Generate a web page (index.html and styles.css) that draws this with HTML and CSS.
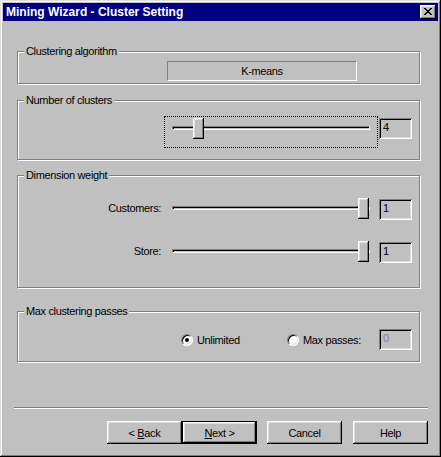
FILE: index.html
```html
<!DOCTYPE html>
<html lang="en">
<head>
    <meta charset="UTF-8">
    <title>Mining Wizard - Cluster Setting</title>
    <link rel="stylesheet" href="styles.css">
</head>
<body>

    <div class="window">

        <!-- Title bar -->
        <div class="titlebar">
            <span class="title">Mining Wizard - Cluster Setting</span>
            <button class="close-btn" aria-label="Close">
                <svg width="8" height="7" viewBox="0 0 8 7" shape-rendering="crispEdges">
                    <path fill="#000" d="M0 0h2v1H0zM6 0h2v1H6zM1 1h2v1H1zM5 1h2v1H5zM2 2h4v1H2zM3 3h2v1H3zM2 4h4v1H2zM1 5h2v1H1zM5 5h2v1H5zM0 6h2v1H0zM6 6h2v1H6z"/>
                </svg>
            </button>
        </div>

        <div class="content">

            <fieldset class="group group-algo">
                <legend>Clustering algorithm</legend>
                <div class="static-box">K-means</div>
            </fieldset>

            <fieldset class="group group-clusters">
                <legend>Number of clusters</legend>
                <div class="slider-row">
                    <div class="slider-box focused">
                        <div class="slider">
                            <div class="track"></div>
                            <div class="thumb" style="left: 21px;"></div>
                        </div>
                    </div>
                    <div class="edit edit-top">4</div>
                </div>
            </fieldset>

            <fieldset class="group group-weight">
                <legend>Dimension weight</legend>
                <div class="slider-row">
                    <span class="slider-label">Customers:</span>
                    <div class="slider-box">
                        <div class="slider">
                            <div class="track"></div>
                            <div class="thumb" style="left: 186px;"></div>
                        </div>
                    </div>
                    <div class="edit">1</div>
                </div>
                <div class="slider-row">
                    <span class="slider-label">Store:</span>
                    <div class="slider-box">
                        <div class="slider">
                            <div class="track"></div>
                            <div class="thumb" style="left: 186px;"></div>
                        </div>
                    </div>
                    <div class="edit">1</div>
                </div>
            </fieldset>

            <fieldset class="group group-passes">
                <legend>Max clustering passes</legend>
                <div class="radio-row">
                    <label class="radio-opt opt-unlimited"><span class="radio checked"></span>Unlimited</label>
                    <label class="radio-opt"><span class="radio"></span>Max passes:</label>
                    <div class="edit edit-disabled">0</div>
                </div>
            </fieldset>

            <div class="separator"></div>

            <!-- Wizard buttons -->
            <div class="buttons">
                <button class="btn">&lt; <u>B</u>ack</button>
                <button class="btn btn-default"><u>N</u>ext &gt;</button>
                <button class="btn btn-cancel">Cancel</button>
                <button class="btn btn-help">Help</button>
            </div>

        </div>
    </div>

</body>
</html>
```

FILE: styles.css
```css
* {
    box-sizing: border-box;
}

body {
    margin: 0;
    background-color: #c0c0c0;
    color: #000;
    font-family: "Liberation Sans", Arial, sans-serif;
    font-size: 11px;
    letter-spacing: -0.35px;
}

.window {
    width: 441px;
    height: 457px;
    padding: 3px;
    background-color: #c0c0c0;
    box-shadow: inset -1px -1px #000, inset 1px 1px #dfdfdf, inset -2px -2px #808080, inset 2px 2px #fff;
}

.titlebar {
    display: flex;
    align-items: center;
    justify-content: space-between;
    height: 18px;
    padding: 0 2px 0 3px;
    background-color: #000080;
    color: #fff;
    font-weight: bold;
    font-size: 12px;
    letter-spacing: 0;
}

.close-btn {
    display: flex;
    align-items: center;
    justify-content: center;
    width: 16px;
    height: 14px;
    padding: 0 1px 1px 0;
    border: none;
    background-color: #c0c0c0;
    box-shadow: inset -1px -1px #000, inset 1px 1px #fff, inset -2px -2px #808080, inset 2px 2px #dfdfdf;
}

/* Group boxes */
.group {
    width: 403px;
    margin: 0 0 0 14px;
    padding: 0 7px 0 0;
    border: 1px solid #808080;
    box-shadow: inset 1px 1px #fff, 1px 1px #fff;
}

.group legend {
    margin-left: 6px;
    padding: 0 2px;
    line-height: 13px;
    background-color: #c0c0c0;
}

.group-algo {
    margin-top: 24px;
    padding-top: 3px;
    padding-bottom: 2px;
}

.group-clusters {
    margin-top: 10px;
    padding-top: 9px;
    padding-bottom: 11px;
}

.group-weight {
    display: flex;
    flex-direction: column;
    gap: 11px;
    margin-top: 9px;
    padding-top: 14px;
    padding-bottom: 16px;
}

.group-passes {
    margin-top: 17px;
    padding-top: 11px;
    padding-bottom: 11px;
}

.static-box {
    width: 190px;
    height: 20px;
    margin-left: 149px;
    border: 1px solid;
    border-color: #808080 #fff #fff #808080;
    text-align: center;
    line-height: 18px;
}

/* Trackbars */
.slider-row {
    display: flex;
    justify-content: flex-end;
    align-items: flex-start;
}

.slider-label {
    margin-top: 6px;
    margin-right: 3px;
    line-height: 13px;
}

.slider-box {
    width: 214px;
    height: 32px;
    padding: 1px 7px 0;
    border: 1px dotted transparent;
}

.slider-box.focused {
    border-color: #000;
}

.slider {
    position: relative;
    height: 21px;
    padding-top: 8px;
}

.track {
    height: 4px;
    border: 1px solid;
    border-color: #808080 #fff #fff #808080;
    background-color: #c0c0c0;
    box-shadow: inset 1px 1px #000;
}

.thumb {
    position: absolute;
    top: 0;
    width: 11px;
    height: 21px;
    background-color: #c0c0c0;
    box-shadow: inset -1px -1px #000, inset 1px 1px #fff, inset -2px -2px #808080, inset 2px 2px #dfdfdf;
}

.edit {
    width: 33px;
    height: 21px;
    margin: 3px 0 0 1px;
    padding-left: 4px;
    background-color: #c0c0c0;
    line-height: 19px;
    box-shadow: inset 1px 1px #808080, inset -1px -1px #fff, inset 2px 2px #000, inset -2px -2px #dfdfdf;
}

.edit-top {
    margin-top: 2px;
}

.edit-disabled {
    margin: 0 0 0 auto;
    color: #808080;
}

/* Radio buttons */
.radio-row {
    display: flex;
    align-items: center;
    height: 21px;
    padding-left: 163px;
}

.radio-opt {
    display: flex;
    align-items: center;
    gap: 4px;
}

.opt-unlimited {
    width: 106px;
}

.radio {
    width: 12px;
    height: 12px;
    border: 1px solid;
    border-color: #808080 #fff #fff #808080;
    border-radius: 50%;
    background-color: #fff;
    box-shadow: inset 1px 1px #000, inset -1px -1px #dfdfdf;
}

.radio.checked::after {
    content: "";
    display: block;
    width: 4px;
    height: 4px;
    margin: 3px;
    border-radius: 50%;
    background-color: #000;
}

.separator {
    width: 414px;
    height: 2px;
    margin: 45px 0 0 11px;
    border-top: 1px solid #808080;
    border-bottom: 1px solid #fff;
}

/* Wizard buttons */
.buttons {
    display: flex;
    justify-content: flex-end;
    margin-top: 12px;
    padding-right: 10px;
}

.btn {
    width: 75px;
    height: 23px;
    padding: 0;
    border: none;
    background-color: #c0c0c0;
    color: #000;
    font-family: "Liberation Sans", Arial, sans-serif;
    font-size: 11px;
    letter-spacing: -0.35px;
    box-shadow: inset -1px -1px #000, inset 1px 1px #fff, inset -2px -2px #808080, inset 2px 2px #dfdfdf;
}

.btn-default {
    box-shadow: inset 0 0 0 1px #000, inset -2px -2px #000, inset 2px 2px #fff, inset -3px -3px #808080, inset 3px 3px #dfdfdf;
}

.btn-cancel {
    margin-left: 10px;
}

.btn-help {
    margin-left: 11px;
}
```
